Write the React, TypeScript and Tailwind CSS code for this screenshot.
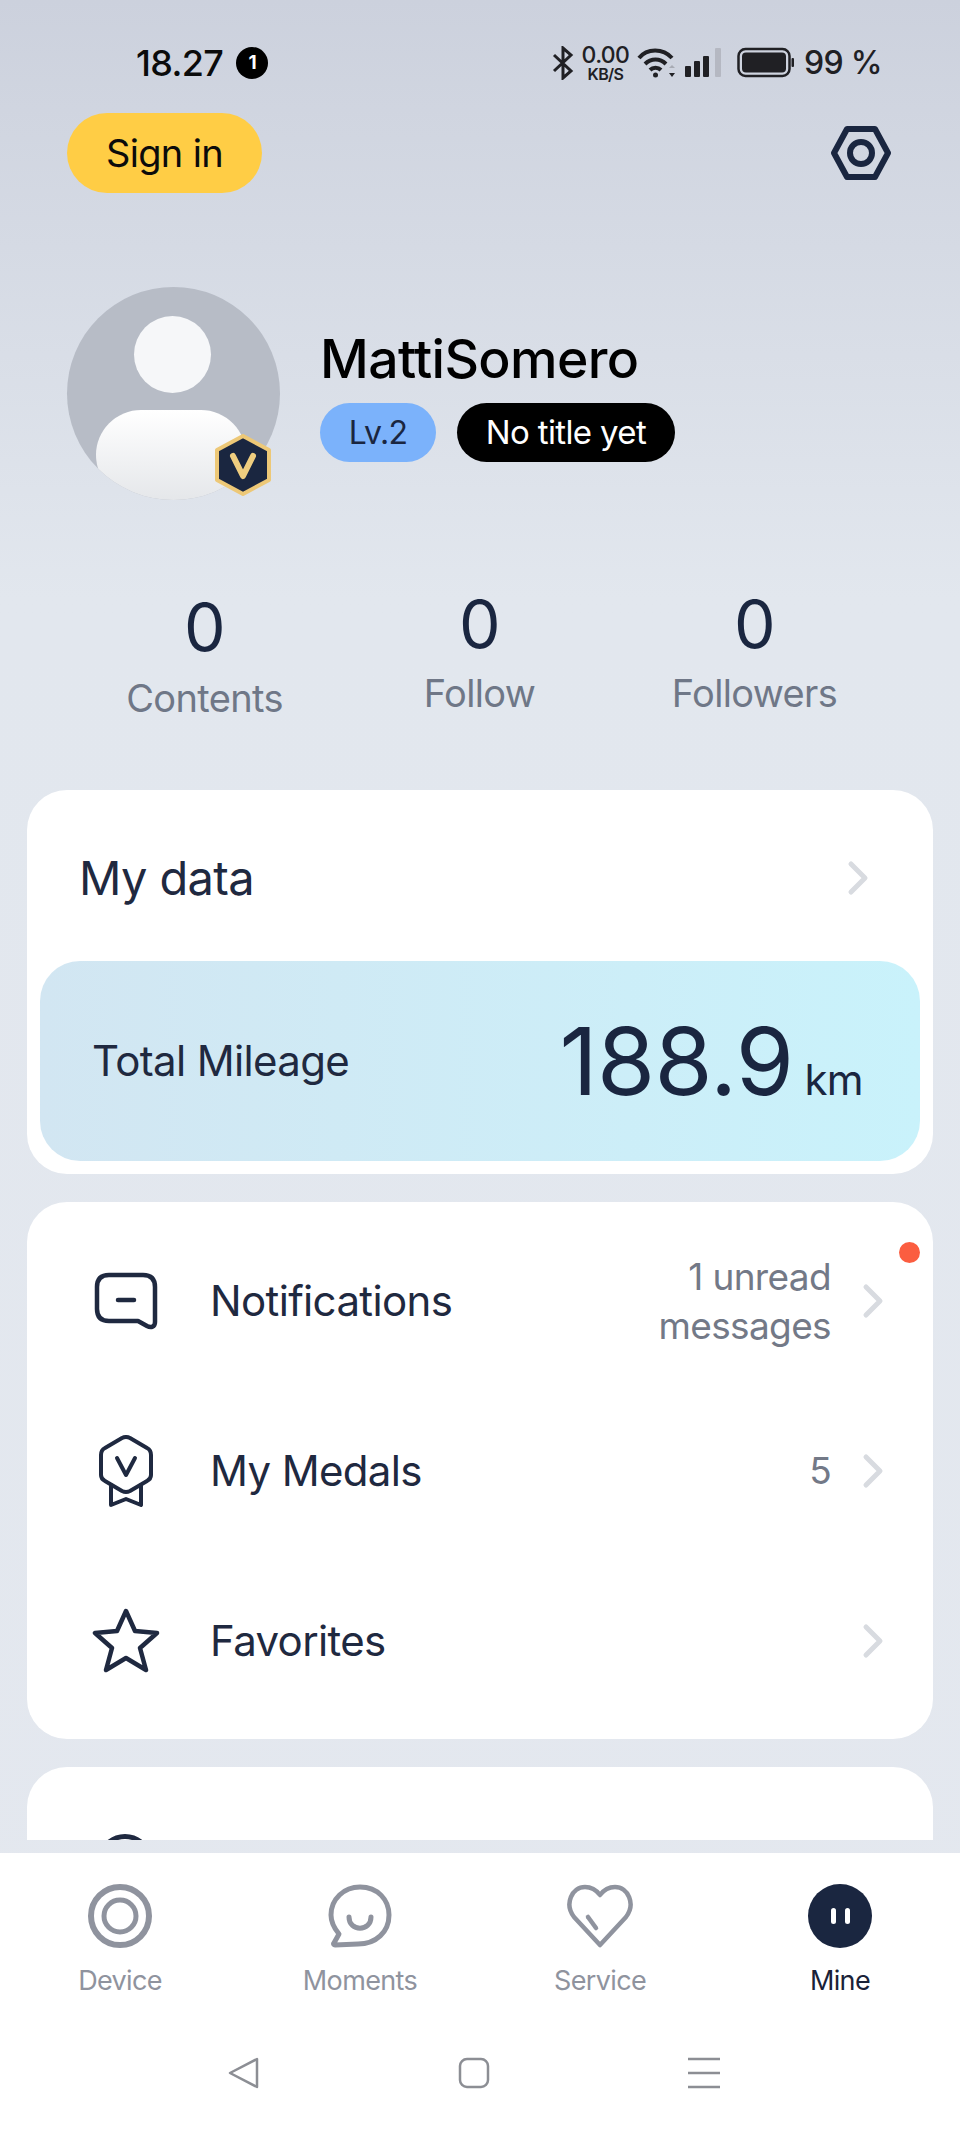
import React from "react";

const Chevron = ({ className = "" }: { className?: string }) => (
  <svg width="24" height="36" viewBox="0 0 24 36" fill="none" className={className}>
    <path d="M5 4 L19 18 L5 32" stroke="#d8dbe0" strokeWidth="5" strokeLinecap="round" strokeLinejoin="round" />
  </svg>
);

const Stat = ({ n, label, shifted }: { n: string; label: string; shifted?: boolean }) => (
  <div className={"flex w-[275px] flex-col items-center " + (shifted ? "-mt-[3px]" : "")}>
    <div className="text-[66px] leading-[72px] text-[#1a2640]">{n}</div>
    <div className={"text-[38px] leading-[48px] text-[#6f7787] " + (shifted ? "mt-[9px]" : "mt-[11px]")}>{label}</div>
  </div>
);

const Row = ({ icon, label, right }: { icon: React.ReactNode; label: string; right?: React.ReactNode }) => (
  <div className="flex h-[170px] items-center pl-[63px] pr-[48px]">
    <div className="flex w-[72px] justify-center">{icon}</div>
    <div className="ml-[48px] flex-1 text-[42px] leading-[52px] text-[#1f2940]">{label}</div>
    {right}
    <Chevron className="ml-[30px]" />
  </div>
);

const NavItem = ({ icon, label, active }: { icon: React.ReactNode; label: string; active?: boolean }) => (
  <div className="flex w-[240px] flex-col items-center">
    <div className="flex h-[66px] items-center justify-center">{icon}</div>
    <div className={"mt-[15px] text-[27px] leading-[34px] " + (active ? "text-[#1a2238]" : "text-[#8f939e]")}>{label}</div>
  </div>
);

export default function App() {
  return (
    <div
      className="flex h-[2133px] w-[960px] flex-col overflow-hidden bg-gradient-to-b from-[#ccd1dd] via-[#e2e7ee] via-[28%] to-[#e4e8ef] tracking-[-0.04em]"
      style={{ fontFamily: 'Inter, "Liberation Sans", Arial, sans-serif' }}
    >
      {/* status bar */}
      <div className="flex h-[113px] shrink-0 items-start justify-between pl-[136px] pr-[78px] pt-[43px]">
        <div className="flex items-center text-[36px] leading-[40px] font-medium text-[#0b0b0b]">
          18.27
          <span className="ml-[13px] flex h-[32px] w-[32px] items-center justify-center rounded-full bg-black text-[19px] font-bold text-white">1</span>
        </div>
        <div className="flex items-center text-[#202024]">
          <svg width="22" height="34" viewBox="0 0 22 34" fill="none" stroke="#202024" strokeWidth="3">
            <path d="M2 9 L19 25 L11 32 V2 L19 9 L2 25" />
          </svg>
          <div className="ml-[7px] flex w-[49px] flex-col items-center">
            <span className="text-[23px] leading-[23px] font-medium">0.00</span>
            <span className="text-[16px] leading-[15px] font-semibold">KB/S</span>
          </div>
          <svg width="40" height="32" viewBox="0 0 40 32" fill="none" className="ml-[7px]" stroke="#202024" strokeWidth="4">
            <path d="M2 11 C10 1 26 1 35 11" />
            <path d="M8 17 C14 11 23 11 29 17" />
            <path d="M13 23 C16 20 21 20 24 23" />
            <circle cx="18.5" cy="28" r="2.5" fill="#202024" stroke="none" />
            <path d="M32 21 L35 18 L38 21 Z" fill="#a8abb4" stroke="none" />
            <path d="M32 26 L38 26 L35 30 Z" fill="#202024" stroke="none" />
          </svg>
          <svg width="38" height="30" viewBox="0 0 38 30" className="ml-[8px]" fill="#202024">
            <rect x="0" y="18" width="6" height="11" rx="1" />
            <rect x="9" y="13" width="6" height="16" rx="1" />
            <rect x="18" y="8" width="6" height="21" rx="1" />
            <rect x="30" y="0" width="6" height="29" rx="1" fill="#b5b8c2" />
          </svg>
          <svg width="58" height="32" viewBox="0 0 58 32" className="ml-[14px]" fill="none">
            <rect x="1.5" y="2" width="51" height="27" rx="7" stroke="#202024" strokeWidth="2.5" />
            <rect x="5" y="5.5" width="44" height="20" rx="4" fill="#202024" />
            <rect x="54.5" y="11" width="2.5" height="9" rx="1" fill="#202024" />
          </svg>
          <span className="ml-[9px] text-[32px] leading-[40px] font-medium">99 %</span>
        </div>
      </div>

      {/* top actions */}
      <div className="flex h-[80px] shrink-0 items-center justify-between pl-[67px] pr-[69px]">
        <div className="flex h-[80px] w-[195px] items-center justify-center rounded-full bg-[#ffcd45] text-[38px] text-[#0b0b0b]">Sign in</div>
        <svg width="60" height="54" viewBox="0 0 60 54" fill="none" stroke="#1a2640" strokeWidth="6" strokeLinejoin="round">
          <path d="M16 3 H44 L57 27 L44 51 H16 L3 27 Z" />
          <circle cx="30" cy="27" r="11" />
        </svg>
      </div>

      {/* profile */}
      <div className="mt-[94px] flex shrink-0 items-center pl-[67px]">
        <div className="relative h-[213px] w-[213px] overflow-visible">
          <div className="relative h-[213px] w-[213px] overflow-hidden rounded-full bg-[#b7bcc6]">
            <div className="absolute left-[67px] top-[29px] h-[77px] w-[77px] rounded-full bg-[#f6f7f9]" />
            <div className="absolute left-[29px] top-[123px] h-[90px] w-[150px] rounded-[45px] bg-gradient-to-b from-white to-[#e5e7ea]" />
          </div>
          <svg width="58" height="62" viewBox="0 0 58 62" className="absolute left-[147px] top-[147px]">
            <path d="M29 2 L55 16 V46 L29 60 L3 46 V16 Z" fill="#1a2640" stroke="#edc877" strokeWidth="4" strokeLinejoin="round" />
            <path d="M19 22 L29 42 L39 22" fill="none" stroke="#efcd7f" strokeWidth="6" strokeLinecap="round" strokeLinejoin="round" />
          </svg>
        </div>
        <div className="ml-[40px] mt-[2px] flex flex-col">
          <div className="text-[53.5px] leading-[64px] font-medium text-black">MattiSomero</div>
          <div className="mt-[12px] flex">
            <div className="flex h-[59px] w-[116px] items-center justify-center rounded-full bg-[#7bb2fb] text-[32px] text-[#1a2640]">Lv.2</div>
            <div className="ml-[21px] flex h-[59px] w-[218px] items-center justify-center rounded-full bg-black text-[33px] text-white">No title yet</div>
          </div>
        </div>
      </div>

      {/* stats */}
      <div className="mt-[91px] flex shrink-0 items-start pl-[67px]">
        <Stat n="0" label="Contents" />
        <Stat n="0" label="Follow" shifted />
        <Stat n="0" label="Followers" shifted />
      </div>

      {/* cards */}
      <div className="mt-[68px] flex min-h-0 flex-1 flex-col px-[27px] pb-[13px]">
        <div className="flex min-h-0 flex-1 flex-col gap-[28px] overflow-hidden">
          <div className="shrink-0 rounded-[40px] bg-white p-[13px]">
            <div className="flex h-[158px] items-center justify-between pb-[8px] pl-[39px] pr-[50px]">
              <span className="text-[47px] leading-[56px] text-[#1f2940]">My data</span>
              <Chevron />
            </div>
            <div className="flex h-[200px] items-center justify-between rounded-[40px] bg-gradient-to-r from-[#d2e6f2] to-[#c9f2fb] pl-[52px] pr-[57px]">
              <span className="text-[42px] leading-[52px] text-[#1f2940]">Total Mileage</span>
              <div className="flex items-baseline">
                <span className="text-[94px] leading-[100px] text-[#1a2640]">188.9</span>
                <span className="ml-[11px] text-[42px] text-[#1a2640]">km</span>
              </div>
            </div>
          </div>

          <div className="relative shrink-0 rounded-[40px] bg-white pb-[13px] pt-[14px]">
            <div className="absolute right-[13px] top-[40px] h-[21px] w-[21px] rounded-full bg-[#fb5d40]" />
            <Row
              label="Notifications"
              icon={
                <svg width="64" height="58" viewBox="0 0 64 58" fill="none" stroke="#1f2940" strokeWidth="4.5" strokeLinejoin="round" strokeLinecap="round">
                  <path d="M15 3 H49 Q61 3 61 15 V50 C61 55 57 56 53 54 L44 49 H15 Q3 49 3 37 V15 Q3 3 15 3 Z" />
                  <path d="M24 28 H40" />
                </svg>
              }
              right={
                <div className="text-right text-[37px] leading-[49px] text-[#737987]">
                  1 unread
                  <br />
                  messages
                </div>
              }
            />
            <Row
              label="My Medals"
              icon={
                <svg width="56" height="72" viewBox="0 0 56 72" fill="none" stroke="#1f2940" strokeWidth="4" strokeLinejoin="round" strokeLinecap="round">
                  <path d="M24 3 Q28 1 32 3 L49 13 Q53 15 53 20 V40 Q53 44 49 46 L32 56 Q28 58 24 56 L7 46 Q3 44 3 40 V20 Q3 15 7 13 Z" />
                  <path d="M19 23 L28 40 L37 23" />
                  <path d="M13 50 V70 L28 64 L43 70 V50" />
                </svg>
              }
              right={<span className="text-[37px] leading-[48px] text-[#737987]">5</span>}
            />
            <Row
              label="Favorites"
              icon={
                <svg width="68" height="66" viewBox="0 0 68 66" fill="none" stroke="#1f2940" strokeWidth="4.5" strokeLinejoin="round">
                  <path d="M34 3 L43 23 L65 25 L48 40 L54 62 L34 50 L14 62 L20 40 L3 25 L25 23 Z" />
                </svg>
              }
            />
          </div>

          <div className="h-[300px] shrink-0 rounded-t-[40px] bg-white pl-[70px] pt-[67px]">
            <div className="h-[56px] w-[56px] rounded-full border-[5px] border-[#1f2940]" />
          </div>
        </div>
      </div>

      {/* bottom nav */}
      <div className="h-[280px] shrink-0 bg-white">
        <div className="flex px-0 pt-[30px]">
          <NavItem
            label="Device"
            icon={
              <svg width="66" height="66" viewBox="0 0 66 66" fill="none" stroke="#8f939e">
                <circle cx="33" cy="33" r="29" strokeWidth="6" />
                <circle cx="33" cy="33" r="16" strokeWidth="5" />
              </svg>
            }
          />
          <NavItem
            label="Moments"
            icon={
              <svg width="64" height="64" viewBox="0 0 64 64" fill="none" stroke="#8f939e" strokeWidth="5" strokeLinecap="round" strokeLinejoin="round">
                <path d="M32 3 C50 3 61 16 61 31 C61 48 48 60 30 60 L7 61 C6 61 5 60 6 59 L11 50 C6 44 3 38 3 31 C3 15 16 3 32 3 Z" />
                <path d="M21 33 C21 48 43 48 43 33" />
              </svg>
            }
          />
          <NavItem
            label="Service"
            icon={
              <svg width="66" height="64" viewBox="0 0 66 64" fill="none" stroke="#8f939e" strokeWidth="4.5" strokeLinecap="round" strokeLinejoin="round">
                <path d="M33 61 L7 33 C-3 20 5 3 18 3 C25 3 30 7 33 11 C36 7 41 3 48 3 C61 3 69 20 59 33 Z" />
                <path d="M21 33 L29 44" />
              </svg>
            }
          />
          <NavItem
            active
            label="Mine"
            icon={
              <div className="flex h-[64px] w-[64px] items-center justify-center gap-[9px] rounded-full bg-[#1a2640]">
                <span className="h-[16px] w-[5px] rounded-full bg-white" />
                <span className="h-[16px] w-[5px] rounded-full bg-white" />
              </div>
            }
          />
        </div>
        <div className="mt-[59px] flex justify-center gap-[198px] pr-[12px]">
          <svg width="32" height="32" viewBox="0 0 32 32" fill="none" stroke="#8c8e94" strokeWidth="2.5" strokeLinejoin="round">
            <path d="M29 2 V30 L2 16 Z" />
          </svg>
          <svg width="32" height="32" viewBox="0 0 32 32" fill="none" stroke="#8c8e94" strokeWidth="2.5">
            <rect x="2" y="2" width="28" height="28" rx="7" />
          </svg>
          <svg width="32" height="32" viewBox="0 0 32 32" fill="none" stroke="#8c8e94" strokeWidth="2.5">
            <path d="M0 2 H32 M0 16 H32 M0 30 H32" />
          </svg>
        </div>
      </div>
    </div>
  );
}
